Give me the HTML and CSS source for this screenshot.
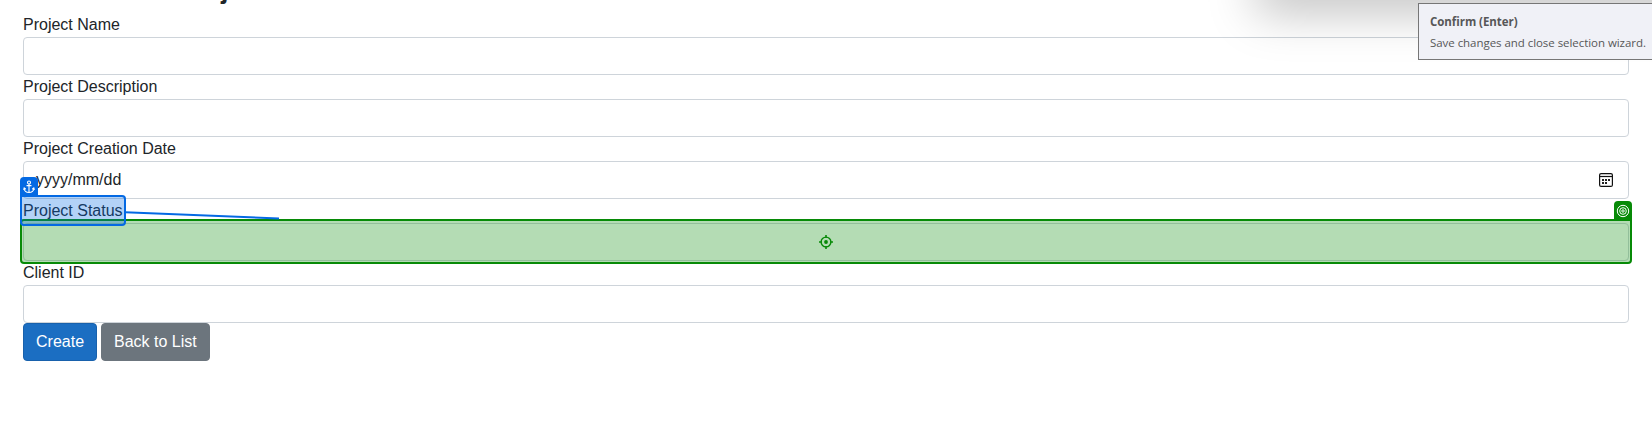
FILE: index.html
```
<!DOCTYPE html>
<html lang="en">
<head>
<meta charset="utf-8">
<title>Create New Project</title>
<link rel="stylesheet" href="styles.css">
</head>
<body>
<main class="page">
  <h1 class="title">Create New Project</h1>
  <form class="form">
    <label class="label">Project Name</label>
    <div class="control"></div>
    <label class="label">Project Description</label>
    <div class="control"></div>
    <label class="label">Project Creation Date</label>
    <div class="control date"><span>yyyy/mm/dd</span>
      <svg class="calendar" width="14" height="14" viewBox="0 0 14 14"><rect x=".6" y=".6" width="12.8" height="12.8" rx="1.5" fill="none" stroke="#111" stroke-width="1.2"/><path d="M1 3.5h12" stroke="#111" stroke-width="1.2"/><path d="M3 6h2v2H3zM6 6h2v2H6zM9 6h2v2H9zM3 9h2v2H3zM6 9h2v2H6z" fill="#222"/></svg>
    </div>
    <label class="label">Project Status</label>
    <div class="control"></div>
    <label class="label">Client ID</label>
    <div class="control"></div>
    <div class="actions">
      <button type="button" class="btn primary">Create</button>
      <button type="button" class="btn secondary">Back to List</button>
    </div>
  </form>
</main>

<div class="target">
  <svg width="14" height="14" viewBox="0 0 14 14" fill="none" stroke="#078a07"><circle cx="7" cy="7" r="4.9" stroke-width="1.4"/><circle cx="7" cy="7" r="1.9" fill="#078a07" stroke="none"/><path d="M7 0v3M7 11v3M0 7h3M11 7h3" stroke-width="1.6"/></svg>
</div>
<div class="tag target-tag">
  <svg width="14" height="14" viewBox="0 0 14 14" fill="none" stroke="#fff"><circle cx="7" cy="7" r="5.7"/><circle cx="7" cy="7" r="3.3"/><circle cx="7" cy="7" r="1.2"/></svg>
</div>
<svg class="connector" width="156" height="12" viewBox="0 0 156 12"><path d="M0 3.3L154 9.5" stroke="#0469e3" stroke-width="2"/></svg>
<div class="anchor"></div>
<div class="tag anchor-tag">
  <svg width="12" height="14" viewBox="0 0 12 14" fill="none" stroke="#fff" stroke-width="1.1"><circle cx="6" cy="2.5" r="1.5"/><path d="M6 4v8.600M3.500 5.600h5M1 8.200c.3 2.700 2.500 4.300 5 4.300s4.700-1.600 5-4.300M.6 9.900L1.200 8l1.600 1.300M11.400 9.900L10.800 8 9.200 9.300"/></svg>
</div>
<div class="window-edge"></div>
<div class="tooltip"><strong>Confirm (Enter)</strong><span>Save changes and close selection wizard.</span></div>
</body>
</html>
```
FILE: styles.css
```
* { box-sizing: border-box; }
html, body { height: 100%; overflow: hidden; }
body { position: relative; margin: 0; background: #fff; color: #212529; font: 16px/24px "Liberation Sans", Arial, sans-serif; }
.page { padding: 0 23px; }
.title { height: 30px; margin: -26px 0 9px; font-size: 26.8px; line-height: 30px; font-weight: 700; }
.form { display: flex; flex-direction: column; }
.label { height: 24px; }
.control { height: 38px; border: 1px solid #ced4da; border-radius: 4px; padding: 6px 12px; }
.date { display: flex; justify-content: space-between; align-items: center; padding-right: 15px; }
.actions { display: flex; gap: 4px; }
.btn { height: 38px; padding: 6px 12px; border: 1px solid; border-radius: 4px; color: #fff; font: inherit; }
.primary { background: #1b6ec2; border-color: #1861ac; }
.secondary { background: #6c757d; border-color: #6c757d; }
/* Selection overlays drawn above the form */
.target { position: absolute; left: 20px; top: 219px; width: 1612px; height: 45px; display: flex; align-items: center; justify-content: center; border: 2px solid #078a07; border-radius: 4px 0 4px 4px; background: rgba(7, 138, 7, .3); }
.tag { position: absolute; width: 18px; height: 19px; display: flex; align-items: center; justify-content: center; border-radius: 4px 4px 0 0; }
.target-tag { left: 1614px; top: 201px; background: #078a07; }
.anchor-tag { left: 20px; top: 177px; background: #0469e3; }
.connector { position: absolute; left: 125px; top: 209px; }
.anchor { position: absolute; left: 20px; top: 195px; width: 106px; height: 31px; border: 2px solid #0469e3; border-radius: 0 4px 4px 4px; background: rgba(4, 105, 227, .3); }
.window-edge { position: absolute; left: 1256px; top: -50px; width: 500px; height: 50px; box-shadow: 0 12px 48px rgba(0, 0, 0, .25); }
.tooltip { position: absolute; left: 1418px; top: 3px; width: 240px; height: 57px; display: flex; flex-direction: column; gap: 5px; padding: 10px 11px; border: 1px solid #767676; background: #f0f1f7; color: #575757; font: 11.5px/16px "Open Sans", "Noto Sans", sans-serif; white-space: nowrap; }
.tooltip strong { letter-spacing: -.05px; }
.tooltip span { letter-spacing: -.05px; }
```
